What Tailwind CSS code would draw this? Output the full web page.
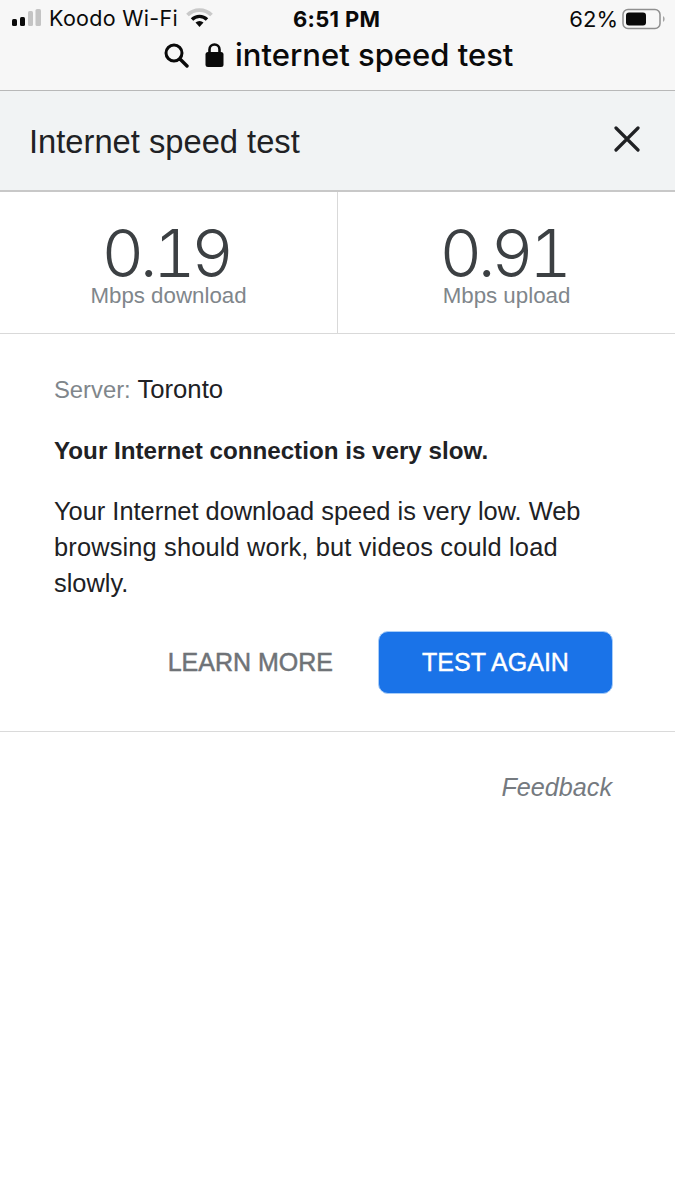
<!DOCTYPE html>
<html>
<head>
<meta charset="utf-8">
<script src="https://cdn.jsdelivr.net/npm/@tailwindcss/browser@4"></script>
</head>
<body class="bg-white font-['Liberation_Sans',sans-serif] w-[675px] h-[1200px] overflow-hidden">
<div class="h-[91px] bg-[#f7f7f7] border-b border-[#b8b8b8] flex flex-col font-['Inter',sans-serif] text-[#0a0a0a]">
  <div class="h-[38px] flex items-center justify-between pl-[12px] pr-[9px] relative">
    <div class="flex items-center">
      <svg width="30" height="20" viewBox="0 0 30 20" fill="none" class="mr-[7px]">
        <rect x="0" y="10" width="5" height="7" rx="1.5" fill="#0a0a0a"/>
        <rect x="8" y="8" width="5" height="9" rx="1.5" fill="#0a0a0a"/>
        <rect x="16" y="2" width="5" height="15" rx="1.5" fill="#c4c4c4"/>
        <rect x="23.5" y="0" width="5.5" height="17" rx="1.5" fill="#c4c4c4"/>
      </svg>
      <span class="text-[21.5px] leading-none tracking-[0.3px] font-normal">Koodo Wi-Fi</span>
      <svg width="27" height="20" viewBox="0 0 27 20" fill="none" class="ml-[8px] relative top-[-1px]">
        <path d="M1.5 7 A17 17 0 0 1 25.5 7" stroke="#c9c9c9" stroke-width="3.8"/>
        <path d="M6 11.5 A10.5 10.5 0 0 1 21 11.5" stroke="#0a0a0a" stroke-width="3.4"/>
        <path d="M9.5 14.5 L13.5 19 L17.5 14.5 A6 6 0 0 0 9.5 14.5 Z" fill="#0a0a0a"/>
      </svg>
    </div>
    <span class="absolute left-[293px] top-[8px] text-[22px] leading-[22px] font-bold tracking-[0.3px]">6:51 PM</span>
    <div class="flex items-center">
      <span class="text-[22px] leading-none">62%</span>
      <svg width="44" height="22" viewBox="0 0 44 22" fill="none" class="ml-[4px]">
        <rect x="1" y="1.5" width="37" height="19" rx="5" stroke="#8f8f8f" stroke-width="1.5"/>
        <rect x="4" y="4.5" width="20" height="13" rx="3" fill="#0a0a0a"/>
        <path d="M41 8 A3.5 3.5 0 0 1 41 14 Z" fill="#a5a5a5"/>
      </svg>
    </div>
  </div>
  <div class="flex items-center pl-[163px] h-[33px]">
    <svg width="26" height="26" viewBox="0 0 26 26" fill="none" class="mr-[16px]">
      <circle cx="11" cy="11" r="8" stroke="#0a0a0a" stroke-width="3"/>
      <path d="M17 17 L24 24" stroke="#0a0a0a" stroke-width="3.4" stroke-linecap="round"/>
    </svg>
    <svg width="19" height="26" viewBox="0 0 19 26" fill="none" class="mr-[11px]">
      <path d="M4.5 11 V7.5 A5 5 0 0 1 14.5 7.5 V11" stroke="#0a0a0a" stroke-width="2.6"/>
      <rect x="0.5" y="10" width="18" height="15" rx="2.5" fill="#0a0a0a"/>
    </svg>
    <span class="text-[31px] leading-none font-medium">internet speed test</span>
  </div>
</div>
<div class="h-[101px] bg-[#f1f3f4] border-b-2 border-[#c8c8c8] flex items-center justify-between pl-[29px] pr-[35px]">
  <span class="text-[32.7px] leading-none text-[#202124] relative top-[2px]">Internet speed test</span>
  <svg width="26" height="26" viewBox="0 0 26 26" fill="none" class="relative top-[-2px]">
    <path d="M2 2 L24 24 M24 2 L2 24" stroke="#202124" stroke-width="3.2" stroke-linecap="round"/>
  </svg>
</div>
<div class="h-[142px] grid grid-cols-[338px_1fr] border-b border-[#d9d9d9]">
  <div class="border-r border-[#d9d9d9] flex flex-col items-center pt-[31px]">
    <div class="font-['Inter',sans-serif] font-light tabular-nums tracking-[-4.5px] text-[66px] leading-[60px] text-[#3c4043] mr-[6px]">0.19</div>
    <div class="text-[22.3px] leading-[26px] text-[#80868b]">Mbps download</div>
  </div>
  <div class="flex flex-col items-center pt-[31px]">
    <div class="font-['Inter',sans-serif] font-light tabular-nums tracking-[-4.5px] text-[66px] leading-[60px] text-[#3c4043] mr-[6px]">0.91</div>
    <div class="text-[22.3px] leading-[26px] text-[#80868b]">Mbps upload</div>
  </div>
</div>
<div class="h-[398px] border-b border-[#dadada] px-[54px]">
  <div class="pt-[41px] text-[25.7px] leading-[28px] text-[#202124]"><span class="text-[#80868b] text-[23.8px]">Server:</span> Toronto</div>
  <div class="mt-[33px] text-[24.2px] leading-[28px] font-bold text-[#202124]">Your Internet connection is very slow.</div>
  <div class="mt-[28px] text-[25.4px] leading-[36px] text-[#202124] w-[560px]">Your Internet download speed is very low. Web<br><span class="tracking-[0.16px]">browsing should work, but videos could load</span><br>slowly.</div>
  <div class="flex items-center justify-end mt-[30px] mr-[8px]">
    <span class="text-[25px] font-medium text-[#6f7377] mr-[45px] [-webkit-text-stroke:0.5px_#6f7377]">LEARN MORE</span>
    <div class="w-[235px] h-[63px] rounded-[10px] bg-[#1a73e8] border border-[#a8cdf8] flex items-center justify-center text-[25px] text-white [-webkit-text-stroke:0.4px_white]">TEST AGAIN</div>
  </div>
</div>
<div class="flex justify-end pr-[63px] pt-[40px] text-[25.2px] leading-[30px] italic text-[#757a7f]">Feedback</div>
</body>
</html>
